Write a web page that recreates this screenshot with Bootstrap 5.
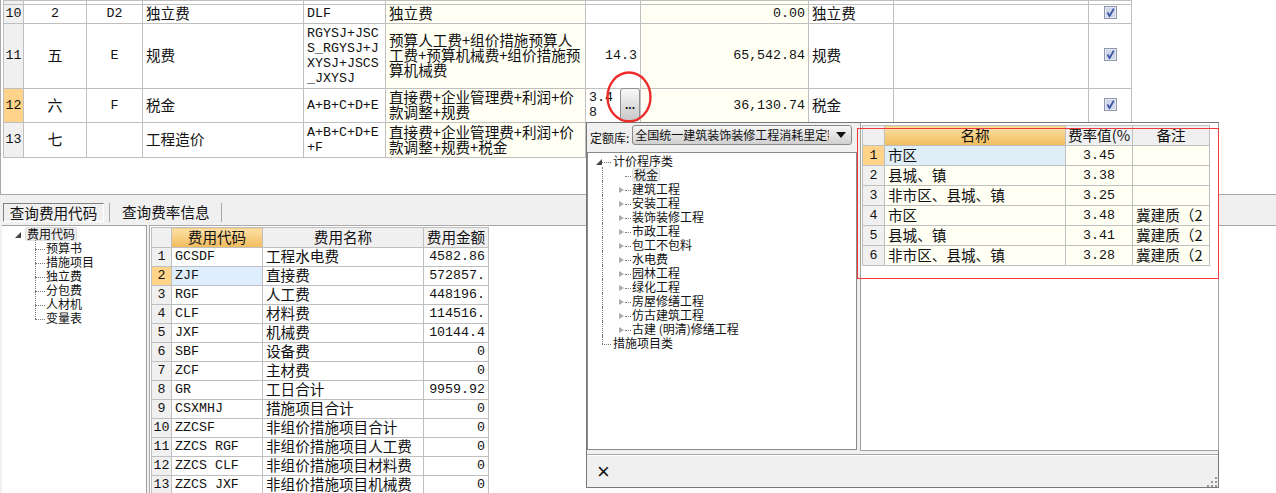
<!DOCTYPE html>
<html lang="zh">
<head>
<meta charset="utf-8">
<title>费用汇总</title>
<link href="https://cdn.jsdelivr.net/npm/bootstrap@5.3.0/dist/css/bootstrap.min.css" rel="stylesheet">
<style>
html,body{margin:0;height:493px;overflow:hidden}
body{position:relative;width:1276px;background:#f0f0f0;color:#111;font-family:"Noto Sans CJK SC","Liberation Sans",sans-serif;font-size:14.6px;line-height:1}
.lt{font-family:"Liberation Mono","Noto Sans CJK SC",monospace;font-size:13.3px}
.top-pane{height:195px;background:#fff;border-left:1px solid #a8a8a8;border-bottom:1px solid #a8a8a8;padding-left:2px;overflow:hidden}
.grid{table-layout:fixed;border-collapse:collapse;margin:0;width:auto;--bs-table-bg:transparent;--bs-table-color:#111;--bs-border-color:#bfbfbf}
.grid td,.grid th{border:1px solid #bfbfbf;padding:0 3px 3px;white-space:nowrap;font-weight:400;vertical-align:middle;line-height:15px;box-shadow:none}
.grid .hd{background:#f0f0f0;text-align:center;padding:0 0 3px}
.grid .sel{background:linear-gradient(#fde0a6,#f1bc5c)}
.grid .rowsel{background:#ffd48a}
.grid .y{background:#fffff4}
.grid .c{text-align:center}
.grid .r{text-align:right}
.grid .lt{padding-bottom:1px}
.grid .nopad{padding:0 0 3px}
.grid .cellsel{background:#dfeefd}
.grid .cellsel2{background:#dfeef7}
.grid .cjk{font-size:15px}
.w20{width:20px}.w63{width:63px}.w56{width:56px}.w161{width:161px}.w82{width:82px}.w200{width:200px}.w55{width:55px}.w168{width:168px}.w85{width:85px}.w195{width:195px}.w43{width:43px}
.w91{width:91px}.w65{width:65px}.w22{width:22px}.w181{width:181px}.w67{width:67px}.w77{width:77px}
.h2{height:3px}.h19{height:19px}.h65{height:65px}.h34{height:34px}.h35{height:35px}.h20{height:20px}
.tick{display:block;margin:0 auto}
.tabstrip{height:30px;padding:8px 0 0 3px}
.tab-on{height:19px;width:101px;border:1px solid;border-color:#808080 #fff #fff #808080;text-align:center;line-height:18px}
.tab-off{width:113px;height:19px;border-right:1px solid #a8a8a8;border-left:1px solid #a8a8a8;text-align:left;padding-left:12px;line-height:17px;margin-left:5px}
.low{height:268px}
.tree-pane{width:145px;margin-left:2px;background:#fff;border:1px solid #a0a0a0;border-bottom:0;border-left:0;padding-top:1px}
.grid-pane{margin-left:2px;background:#fff;border-top:1px solid #a8a8a8;border-left:1px solid #a8a8a8;padding:1px 0 0 1px;overflow:hidden}
.tr{position:relative;height:14px;line-height:14px;font-size:12px;white-space:nowrap}
.tr.l1{padding-left:44px}
.tr.l0{padding-left:23px}
.tr.l1::before{content:"";position:absolute;left:33px;top:8px;width:10px;border-top:1px dotted #777}
.tr.l1::after{content:"";position:absolute;left:33px;top:-6px;height:14px;border-left:1px dotted #777}
.badge-node{display:inline-block;background:#eee;border-radius:3px;padding:0 2px;box-shadow:inset 0 0 0 1px #dedede}
.tri{position:absolute;width:0;height:0;left:13px;top:5px;border-style:solid;border-width:0 0 6px 6px;border-color:transparent transparent #444 transparent}
.pop{position:absolute;left:586px;top:122px;width:633px;height:366px;background:#f0f0f0;border:1px solid #777}
.pop-left{width:271px}
.tool{height:29px;padding:2px 0 0 3px;font-size:12px}
.tool-label{margin-top:7px}
.combo{width:220px;height:20px;margin-left:3px;border:1px solid #8a8a8a;border-radius:3px;background:linear-gradient(#f6f6f6,#d0d0d0);padding:0 2px;line-height:17px;overflow:hidden;white-space:nowrap;position:relative;font-size:12px}
.combo span{display:block;width:194px;overflow:hidden}
.combo i{position:absolute;right:5px;top:6px;width:0;height:0;border-style:solid;border-width:6px 5px 0 5px;border-color:#111 transparent transparent transparent}
.pop-tree{height:298px;width:270px;background:#fff;border:1px solid #8a8a8a;padding-top:1px;position:relative}
.ptr{position:relative;height:14px;line-height:14px;font-size:12px;white-space:nowrap}
.ptr.p0{padding-left:25px}
.ptr.p1{padding-left:44px}
.ptr .tri{left:8px}
.ptr .oa{position:absolute;left:31px;top:5px;width:0;height:0;border-style:solid;border-width:3px 0 3px 5px;border-color:transparent transparent transparent #aaa}
.ptr .dash{position:absolute;left:37px;top:8px;width:6px;border-top:1px dotted #777}
.ptr .dash0{position:absolute;left:14px;top:8px;width:9px;border-top:1px dotted #777}
.ptr.p1::before{content:"";position:absolute;left:14px;top:-1px;height:16px;border-left:1px dotted #777}
.ptr.end::before{content:"";position:absolute;left:14px;top:-1px;height:9px;border-left:1px dotted #777}
.pop-right{width:359px;margin-left:2px;height:328px;background:#fff;border:1px solid #a0a0a0;border-top:0;padding:2px 0 0 1px}
.pop-foot{height:34px;margin-top:3px;border-top:1px solid #a8a8a8;box-shadow:inset 0 1px 0 #fff;position:relative;padding:5px 0 0 10px;font-family:"Liberation Sans",sans-serif;font-size:22px;line-height:24px}
.grip{position:absolute;right:0;bottom:0}
.dots{position:absolute;left:620px;top:88px;width:20px;height:33px;border:1px solid #909090;border-radius:3px;background:linear-gradient(#f8f8f8,#c8c8c8);padding:0;text-align:center;font-size:12px;font-weight:700;line-height:28px;color:#111;font-family:"Liberation Sans",sans-serif}
.ring{position:absolute;left:605px;top:70px}
.redbox{position:absolute;left:857px;top:128px;width:362px;height:151px;border:1px solid #f03a3a;pointer-events:none}
</style>
</head>
<body>
<svg width="0" height="0" class="position-absolute">
  <symbol id="chk" viewBox="0 0 13 13">
    <rect x=".5" y=".5" width="12" height="12" fill="#e4e8f2" stroke="#9297ad"/>
    <rect x="2" y="2" width="9" height="9" fill="#cfd6e8"/>
    <path d="M3.5 6.5 5.6 10 9.8 2.6" fill="none" stroke="#3a55a8" stroke-width="1.8"/>
  </symbol>
</svg>

<div class="top-pane">
<table class="table grid">
<colgroup><col class="w20"><col class="w63"><col class="w56"><col class="w161"><col class="w82"><col class="w200"><col class="w55"><col class="w168"><col class="w85"><col class="w195"><col class="w43"></colgroup>
<tbody>
<tr class="h2"><td class="hd"></td><td></td><td></td><td></td><td></td><td class="y"></td><td></td><td class="y"></td><td></td><td></td><td></td></tr>
<tr class="h19"><td class="hd lt">10</td><td class="c lt">2</td><td class="c lt">D2</td><td>独立费</td><td class="lt">DLF</td><td class="y">独立费</td><td></td><td class="y r lt">0.00</td><td>独立费</td><td></td><td><svg class="tick" width="13" height="13"><use href="#chk"/></svg></td></tr>
<tr class="h65"><td class="hd lt">11</td><td class="c cjk">五</td><td class="c lt">E</td><td>规费</td><td class="lt">RGYSJ+JSC<br>S_RGYSJ+J<br>XYSJ+JSCS<br>_JXYSJ</td><td class="y">预算人工费+组价措施预算人<br>工费+预算机械费+组价措施预<br>算机械费</td><td class="r lt">14.3</td><td class="y r lt">65,542.84</td><td>规费</td><td></td><td><svg class="tick" width="13" height="13"><use href="#chk"/></svg></td></tr>
<tr class="h34"><td class="hd rowsel lt">12</td><td class="c cjk">六</td><td class="c lt">F</td><td>税金</td><td class="lt">A+B+C+D+E</td><td class="y">直接费+企业管理费+利润+价<br>款调整+规费</td><td class="lt">3.4<br>8</td><td class="y r lt">36,130.74</td><td>税金</td><td></td><td><svg class="tick" width="13" height="13"><use href="#chk"/></svg></td></tr>
<tr class="h35"><td class="hd lt">13</td><td class="c cjk">七</td><td></td><td>工程造价</td><td class="lt">A+B+C+D+E<br>+F</td><td class="y">直接费+企业管理费+利润+价<br>款调整+规费+税金</td><td></td><td class="y"></td><td></td><td></td><td></td></tr>
</tbody>
</table>
</div>

<div class="tabstrip d-flex">
  <div class="tab-on">查询费用代码</div>
  <div class="tab-off">查询费率信息</div>
</div>

<div class="low d-flex">
  <div class="tree-pane flex-shrink-0">
    <div class="tr l0"><span class="tri"></span><span class="badge-node">费用代码</span></div>
    <div class="tr l1">预算书</div>
    <div class="tr l1">措施项目</div>
    <div class="tr l1">独立费</div>
    <div class="tr l1">分包费</div>
    <div class="tr l1">人材机</div>
    <div class="tr l1">变量表</div>
  </div>
  <div class="grid-pane flex-grow-1">
    <table class="table grid">
      <colgroup><col class="w20"><col class="w91"><col class="w161"><col class="w65"></colgroup>
      <tbody>
      <tr class="h20"><td class="hd"></td><td class="hd sel">费用代码</td><td class="hd">费用名称</td><td class="hd">费用金额</td></tr>
      <tr class="h19"><td class="hd lt">1</td><td class="lt">GCSDF</td><td>工程水电费</td><td class="lt r">4582.86</td></tr>
      <tr class="h19"><td class="hd rowsel lt">2</td><td class="lt cellsel">ZJF</td><td>直接费</td><td class="lt r">572857.</td></tr>
      <tr class="h19"><td class="hd lt">3</td><td class="lt">RGF</td><td>人工费</td><td class="lt r">448196.</td></tr>
      <tr class="h19"><td class="hd lt">4</td><td class="lt">CLF</td><td>材料费</td><td class="lt r">114516.</td></tr>
      <tr class="h19"><td class="hd lt">5</td><td class="lt">JXF</td><td>机械费</td><td class="lt r">10144.4</td></tr>
      <tr class="h19"><td class="hd lt">6</td><td class="lt">SBF</td><td>设备费</td><td class="lt r">0</td></tr>
      <tr class="h19"><td class="hd lt">7</td><td class="lt">ZCF</td><td>主材费</td><td class="lt r">0</td></tr>
      <tr class="h19"><td class="hd lt">8</td><td class="lt">GR</td><td>工日合计</td><td class="lt r">9959.92</td></tr>
      <tr class="h19"><td class="hd lt">9</td><td class="lt">CSXMHJ</td><td>措施项目合计</td><td class="lt r">0</td></tr>
      <tr class="h19"><td class="hd lt">10</td><td class="lt">ZZCSF</td><td>非组价措施项目合计</td><td class="lt r">0</td></tr>
      <tr class="h19"><td class="hd lt">11</td><td class="lt">ZZCS RGF</td><td>非组价措施项目人工费</td><td class="lt r">0</td></tr>
      <tr class="h19"><td class="hd lt">12</td><td class="lt">ZZCS CLF</td><td>非组价措施项目材料费</td><td class="lt r">0</td></tr>
      <tr class="h19"><td class="hd lt">13</td><td class="lt">ZZCS JXF</td><td>非组价措施项目机械费</td><td class="lt r">0</td></tr>
      </tbody>
    </table>
  </div>
</div>

<button type="button" class="btn dots">...</button>

<div class="pop">
  <div class="d-flex">
    <div class="pop-left flex-shrink-0">
      <div class="tool d-flex align-items-start"><span class="tool-label">定额库:</span><div class="combo"><span>全国统一建筑装饰装修工程消耗里定额</span><i></i></div></div>
      <div class="pop-tree">
        <div class="ptr p0"><span class="tri"></span><span class="dash0"></span>计价程序类</div>
        <div class="ptr p1"><span class="dash"></span><span class="badge-node">税金</span></div>
        <div class="ptr p1"><span class="oa"></span><span class="dash"></span>建筑工程</div>
        <div class="ptr p1"><span class="oa"></span><span class="dash"></span>安装工程</div>
        <div class="ptr p1"><span class="oa"></span><span class="dash"></span>装饰装修工程</div>
        <div class="ptr p1"><span class="oa"></span><span class="dash"></span>市政工程</div>
        <div class="ptr p1"><span class="oa"></span><span class="dash"></span>包工不包料</div>
        <div class="ptr p1"><span class="oa"></span><span class="dash"></span>水电费</div>
        <div class="ptr p1"><span class="oa"></span><span class="dash"></span>园林工程</div>
        <div class="ptr p1"><span class="oa"></span><span class="dash"></span>绿化工程</div>
        <div class="ptr p1"><span class="oa"></span><span class="dash"></span>房屋修缮工程</div>
        <div class="ptr p1"><span class="oa"></span><span class="dash"></span>仿古建筑工程</div>
        <div class="ptr p1"><span class="oa"></span><span class="dash"></span>古建 (明清)修缮工程</div>
        <div class="ptr p0 end"><span class="dash0"></span>措施项目类</div>
      </div>
    </div>
    <div class="pop-right flex-shrink-0">
      <table class="table grid">
        <colgroup><col class="w22"><col class="w181"><col class="w67"><col class="w77"></colgroup>
        <tbody>
        <tr class="h20"><td class="hd"></td><td class="hd sel">名称</td><td class="hd nopad">费率值(%</td><td class="hd">备注</td></tr>
        <tr class="h20"><td class="hd rowsel lt">1</td><td class="cellsel2">市区</td><td class="y c lt">3.45</td><td class="y"></td></tr>
        <tr class="h20"><td class="hd lt">2</td><td class="y">县城、镇</td><td class="y c lt">3.38</td><td class="y"></td></tr>
        <tr class="h20"><td class="hd lt">3</td><td class="y">非市区、县城、镇</td><td class="y c lt">3.25</td><td class="y"></td></tr>
        <tr class="h20"><td class="hd lt">4</td><td class="y">市区</td><td class="y c lt">3.48</td><td class="y">冀建质（2</td></tr>
        <tr class="h20"><td class="hd lt">5</td><td class="y">县城、镇</td><td class="y c lt">3.41</td><td class="y">冀建质（2</td></tr>
        <tr class="h20"><td class="hd lt">6</td><td class="y">非市区、县城、镇</td><td class="y c lt">3.28</td><td class="y">冀建质（2</td></tr>
        </tbody>
      </table>
    </div>
  </div>
  <div class="pop-foot">×
    <svg class="grip" width="11" height="11" viewBox="0 0 11 11"><path d="M8 0h2v2H8zM8 4h2v2H8zM4 4h2v2H4zM8 8h2v2H8zM4 8h2v2H4zM0 8h2v2H0z" fill="#999"/></svg>
  </div>
</div>

<svg class="ring" width="48" height="54" viewBox="0 0 48 54"><ellipse cx="24" cy="27" rx="21.5" ry="24.5" fill="none" stroke="#ee2b2b" stroke-width="2.4"/></svg>
<div class="redbox"></div>
</body>
</html>
